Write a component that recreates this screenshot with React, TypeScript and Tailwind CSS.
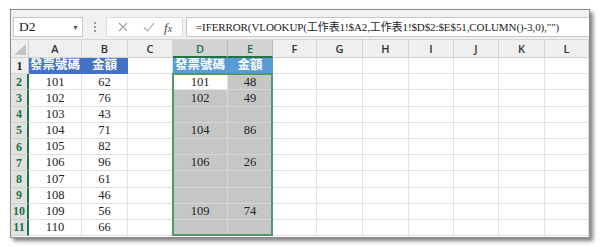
import React from "react";

const COLS = ["A", "B", "C", "D", "E", "F", "G", "H", "I", "J", "K", "L"];
const A = ["101", "102", "103", "104", "105", "106", "107", "108", "109", "110"];
const B = ["62", "76", "43", "71", "82", "96", "61", "46", "56", "66"];
const D = ["101", "102", "", "104", "", "106", "", "", "109", ""];
const E = ["48", "49", "", "86", "", "26", "", "", "74", ""];

const serif = { fontFamily: '"Liberation Serif", "Noto Sans CJK TC", serif' };
const sans = { fontFamily: '"Open Sans", "Liberation Sans", sans-serif' };

export default function App() {
  const rows = Array.from({ length: 11 }, (_, i) => i + 1);
  return (
    <div className="w-[600px] h-[247px] bg-white overflow-hidden">
      <div className="ml-[10px] mt-[9px] w-[580px] h-[229px] border border-[#8c8c8c] bg-[#f1f1f1] shadow-[3px_3px_4px_rgba(0,0,0,0.5)] flex flex-col">
        {/* formula bar */}
        <div className="h-[30px] flex items-start pt-[7px] pl-[2px] border-b border-[#d4d4d4]">
          <div className="w-[70px] h-[20px] bg-white border border-[#c6c6c6] flex items-center justify-between pl-[5px] pr-[3px]">
            <span className="text-[13.5px] text-[#222] leading-none" style={serif}>D2</span>
            <span className="text-[7px] text-[#555] leading-none">▼</span>
          </div>
          <div className="w-[23px] h-[20px] flex flex-col items-center justify-center gap-[2px]">
            <span className="w-[2px] h-[2px] bg-[#9a9a9a]" />
            <span className="w-[2px] h-[2px] bg-[#9a9a9a]" />
            <span className="w-[2px] h-[2px] bg-[#9a9a9a]" />
          </div>
          <div className="w-[77px] h-[20px] bg-white border border-[#dcdcdc] flex items-center">
            <svg width="22" height="18" viewBox="0 0 22 18" className="ml-[5px]">
              <path d="M7 5 L15 13 M15 5 L7 13" stroke="#a6a6a6" strokeWidth="1.1" fill="none" />
            </svg>
            <svg width="22" height="18" viewBox="0 0 22 18" className="ml-[4px]">
              <path d="M6 9.5 L9.5 13 L16 5" stroke="#a6a6a6" strokeWidth="1.1" fill="none" />
            </svg>
            <span className="ml-[4px] text-[13px] italic text-[#444] leading-none" style={serif}>
              f<span className="text-[10px]">x</span>
            </span>
          </div>
          <div className="flex-1 h-[20px] bg-white border border-[#c6c6c6] border-r-0 ml-[3px] flex items-center pl-[9px] overflow-hidden whitespace-nowrap">
            <span className="text-[11px] text-[#222] leading-none tracking-[-0.1px]" style={serif}>
              =IFERROR(VLOOKUP(工作表1!$A2,工作表1!$D$2:$E$51,COLUMN()-3,0),"")
            </span>
          </div>
        </div>
        {/* sheet */}
        <div className="relative flex-1 bg-white">
          <div className="grid grid-cols-[18px_53px_46px_45px_55px_45px_44px_46px_46px_45px_45px_46px_44px] grid-rows-[18px_repeat(11,16.2px)]">
            {/* corner */}
            <div className="bg-[#efefef] border-r border-b border-[#d0d0d0] flex items-end justify-end pr-[2px] pb-[2px]">
              <svg width="12" height="11" viewBox="0 0 12 11">
                <path d="M12 0 L12 11 L0 11 Z" fill="#c4c4c4" />
              </svg>
            </div>
            {COLS.map((c) => {
              const sel = c === "D" || c === "E";
              return (
                <div
                  key={c}
                  className={
                    "flex items-center justify-center text-[11px] font-semibold leading-none border-r " +
                    (sel
                      ? "bg-[#d3d3d3] text-[#217346] border-[#b9b9b9] border-b-2 border-b-[#217346]"
                      : "bg-[#efefef] text-[#333] border-[#d6d6d6] border-b border-b-[#d0d0d0]")
                  }
                  style={sans}
                >
                  {c}
                </div>
              );
            })}
            {rows.map((r) => {
              const selRow = r >= 2;
              const cells: React.ReactNode[] = [];
              cells.push(
                <div
                  key={"h" + r}
                  className={
                    "flex items-center justify-center text-[12px] font-bold leading-none border-b " +
                    (selRow
                      ? "bg-[#e1e1e1] text-[#217346] border-[#cfcfcf] border-r-2 border-r-[#217346]"
                      : "bg-[#efefef] text-[#222] border-[#d6d6d6] border-r border-r-[#c8c8c8]")
                  }
                  style={serif}
                >
                  {r}
                </div>
              );
              COLS.forEach((c) => {
                let text = "";
                let cls = "bg-white text-[#222] border-[#e1e1e1]";
                if (r === 1) {
                  if (c === "A") { text = "發票號碼"; cls = "bg-[#4472c4] text-white border-[#4472c4]"; }
                  else if (c === "B") { text = "金額"; cls = "bg-[#4472c4] text-white border-[#4472c4]"; }
                  else if (c === "D") { text = "發票號碼"; cls = "bg-[#5b9bd5] text-white border-[#5b9bd5]"; }
                  else if (c === "E") { text = "金額"; cls = "bg-[#5b9bd5] text-white border-[#5b9bd5]"; }
                } else {
                  const i = r - 2;
                  if (c === "A") text = A[i];
                  else if (c === "B") text = B[i];
                  else if (c === "D") {
                    text = D[i];
                    if (r !== 2) cls = "bg-[#c6c6c6] text-[#222] border-[#d6d6d6]";
                  } else if (c === "E") {
                    text = E[i];
                    cls = "bg-[#c6c6c6] text-[#222] border-[#d6d6d6]";
                  }
                }
                const isHead = r === 1 && text !== "";
                cells.push(
                  <div
                    key={c + r}
                    className={
                      "flex items-center justify-center border-r border-b leading-none whitespace-nowrap " +
                      (isHead ? "text-[12.5px] font-semibold " : "text-[12.5px] ") +
                      cls
                    }
                    style={serif}
                  >
                    {text}
                  </div>
                );
              });
              return cells;
            })}
          </div>
          {/* selection border */}
          <div className="absolute left-[161px] top-[33.2px] w-[101px] h-[163px] border-2 border-[#4e9a69] pointer-events-none" />
        </div>
      </div>
    </div>
  );
}
